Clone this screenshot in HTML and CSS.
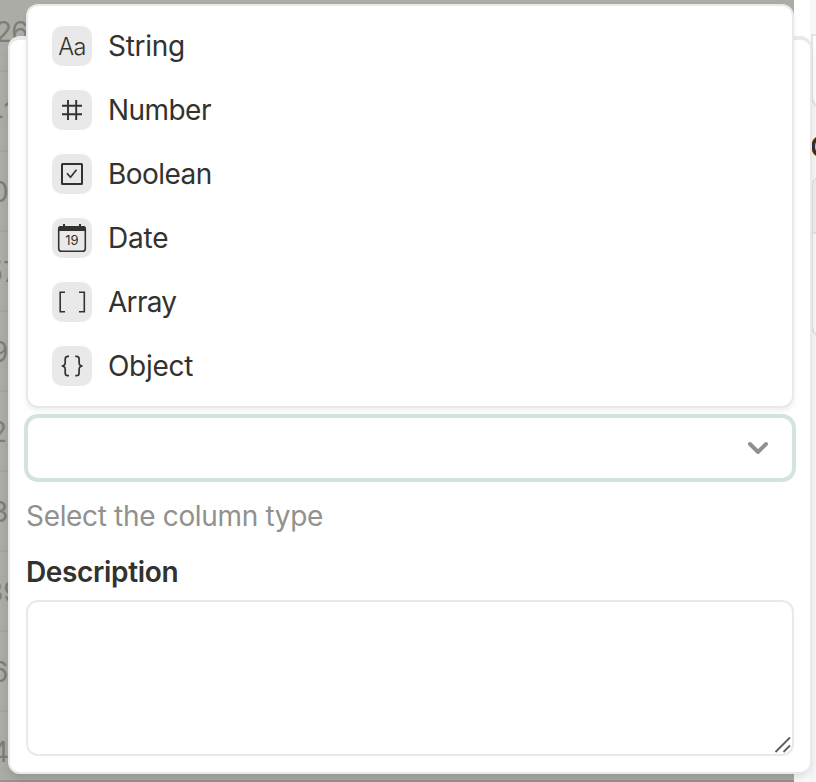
FILE: index.html
```html
<!DOCTYPE html>
<html lang="en">
<head>
<meta charset="utf-8">
<title>Column type</title>
<link rel="stylesheet" href="styles.css">
</head>
<body>
<div class="page">
  <div class="table">
    <div class="row">260</div><div class="row"><span class="s41">41</span></div><div class="row"><span class="s1">0</span></div><div class="row"><span class="s57">57</span></div><div class="row"><span class="s1">9</span></div><div class="row"><span class="s2">2</span></div><div class="row"><span class="s1">3</span></div><div class="row"><span class="s39">39</span></div><div class="row"><span class="s1">6</span></div><div class="row"><span class="s1">4</span></div>
  </div>
  <div class="aside">
    <div class="side-card first"></div>
    <div class="side-title">C</div>
    <div class="side-card second"><div class="side-head"></div></div>
  </div>
</div>
<main class="dialog">
  <div class="select">
    <svg width="24" height="16" viewBox="0 0 24 16"><path d="M4 4L12 12L20 4" fill="none" stroke="#91918d" stroke-width="4" stroke-linecap="round" stroke-linejoin="round"/></svg>
    <div class="menu">
      <div class="option"><span class="icon"><span class="aa">Aa</span></span><span class="label string">String</span></div>
      <div class="option"><span class="icon"><svg width="40" height="40" viewBox="0 0 40 40"><path d="M16 10V30M24.2 10V30M10 15.8H30M10 24.2H30" fill="none" stroke="#32322e" stroke-width="1.9"/></svg></span><span class="label number">Number</span></div>
      <div class="option"><span class="icon"><svg width="40" height="40" viewBox="0 0 40 40"><rect x="10" y="10" width="20" height="20" rx="0.5" fill="none" stroke="#32322e" stroke-width="2"/><path d="M15 19.2L18.5 23.2L24.5 15.8" fill="none" stroke="#32322e" stroke-width="1.7"/></svg></span><span class="label boolean">Boolean</span></div>
      <div class="option"><span class="icon"><svg width="40" height="40" viewBox="0 0 40 40"><rect x="6.7" y="8.8" width="26.6" height="24.4" rx="2.8" fill="none" stroke="#32322e" stroke-width="1.6"/><path d="M6 13V10.5Q6 8 8.5 8H11V6H13V8H27V6H29V8H31.5Q34 8 34 10.5V13Z" fill="#32322e"/><text class="day" x="20" y="26.5" text-anchor="middle">19</text></svg></span><span class="label date">Date</span></div>
      <div class="option"><span class="icon"><svg width="40" height="40" viewBox="0 0 40 40"><path d="M13 10.2H8.2V29.8H13M27 10.2H32.3V29.8H27" fill="none" stroke="#32322e" stroke-width="1.6"/></svg></span><span class="label array">Array</span></div>
      <div class="option"><span class="icon"><svg width="40" height="40" viewBox="0 0 40 40"><path d="M17 10.3H15.8Q13.2 10.3 13.2 13V16.5Q13.2 20 9.7 20Q13.2 20 13.2 23.5V27Q13.2 29.7 15.8 29.7H17M23.3 10.3H24.5Q27.1 10.3 27.1 13V16.5Q27.1 20 30.6 20Q27.1 20 27.1 23.5V27Q27.1 29.7 24.5 29.7H23.3" fill="none" stroke="#32322e" stroke-width="1.7"/></svg></span><span class="label object">Object</span></div>
    </div>
  </div>
  <p class="hint">Select the column type</p>
  <p class="heading">Description</p>
  <div class="textarea"><svg width="18" height="18" viewBox="0 0 18 18"><path d="M1.5 16L16 1.5M9.5 16L16 9.5" fill="none" stroke="#5c5c60" stroke-width="1.8"/></svg></div>
</main>
</body>
</html>
```
FILE: styles.css
```css
* { box-sizing: border-box; }
body { margin: 0; width: 816px; height: 782px; overflow: hidden; font-family: Inter, "Liberation Sans", sans-serif; color: #32322e; background: #fff; }
.page { display: flex; height: 782px; }
.table { width: 794px; height: 782px; background: #abaca6; overflow: hidden; border-bottom: 2px solid #949590; }
.row { height: 80px; border-bottom: 2px solid #a5a6a0; font-size: 28px; line-height: 80px; color: #7d7e78; white-space: nowrap; }
.row:first-child { height: 72px; line-height: 64px; text-indent: -5px; letter-spacing: -0.8px; }
.row span { display: inline-block; }
.s1 { margin-left: -9px; }
.s2 { margin-left: -10px; }
.s41 { margin-left: -14px; }
.s57 { margin-left: -14px; }
.s39 { margin-left: -14px; }
.aside { width: 22px; padding-left: 17px; background: linear-gradient(90deg, #fff 16px, #f8f8f8 16px); overflow: hidden; }
.side-card { width: 60px; border: 2px solid #e5e5e5; border-radius: 12px; }
.first { height: 75px; margin-top: 34px; border-top-left-radius: 0; background: #fff; }
.side-title { height: 66px; padding-top: 21px; font-size: 28px; line-height: 34px; font-weight: 600; text-indent: -1px; }
.second { height: 163px; background: #fafafa; overflow: hidden; }
.side-head { height: 57px; background: #efefef; border-bottom: 2px solid #e3e3e3; }
.dialog { position: absolute; left: 8px; top: 36px; width: 804px; height: 738px; padding: 374px 12px 0 12px; border: 2px solid #e9e9e9; border-top-width: 4px; border-radius: 12px; background: #fff; box-shadow: 0 6px 10px -1px rgba(0,0,0,.12); }
.select { position: relative; display: flex; align-items: center; justify-content: flex-end; width: 772px; height: 68px; margin-left: 2px; padding: 0 22px 0 0; border: 4px solid #d5e3dd; border-radius: 14px; }
.menu { position: absolute; left: -2px; bottom: 70px; width: 768px; height: 404px; padding: 8px 24px; border: 2px solid #e9e9e9; border-radius: 12px; background: #fff; box-shadow: 0 3px 5px rgba(0,0,0,.06); }
.option { display: flex; align-items: center; gap: 16px; height: 64px; }
.icon { display: flex; align-items: center; justify-content: center; width: 40px; height: 40px; border-radius: 10px; background: #e9e9e9; }
.aa { font-size: 23.5px; font-weight: 300; line-height: 40px; letter-spacing: -0.6px; padding-top: 1px; }
.day { font-family: Inter, sans-serif; font-size: 13px; fill: #32322e; }
.label, .hint, .heading { font-size: 28px; line-height: 40px; white-space: nowrap; }
.label, .hint { font-weight: 430; }
.string, .object { letter-spacing: -0.3px; }
.number, .boolean { letter-spacing: -0.55px; }
.date { letter-spacing: -0.2px; }
.array { letter-spacing: -0.7px; }
.hint, .heading { margin: 0; padding-left: 4px; }
.hint { margin-top: 14px; color: #91918d; letter-spacing: -0.33px; }
.heading { margin-top: 16px; font-weight: 600; letter-spacing: -0.35px; }
.textarea { display: flex; align-items: flex-end; justify-content: flex-end; width: 768px; height: 156px; margin: 8px 0 0 4px; border: 2px solid #e9e9e9; border-radius: 12px; }
```
